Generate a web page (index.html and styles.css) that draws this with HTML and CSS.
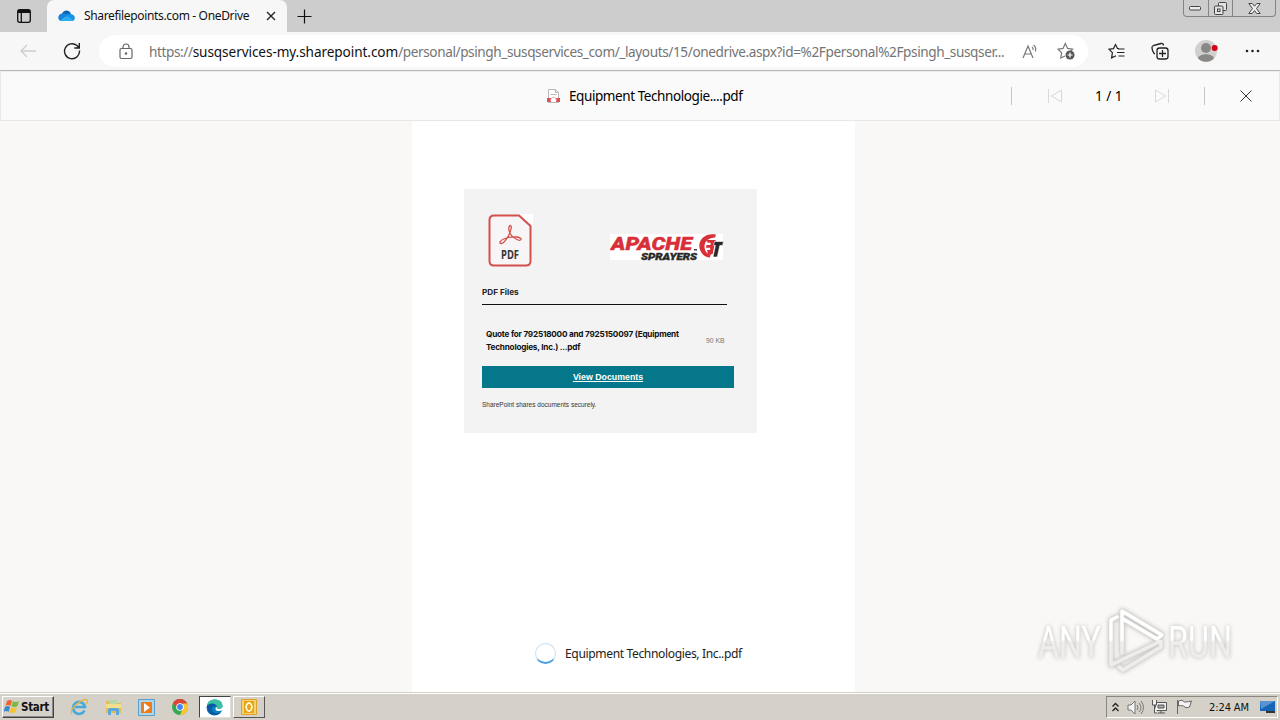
FILE: index.html
```html
<!DOCTYPE html>
<html lang="en">
<head>
    <meta charset="UTF-8">
    <meta name="viewport" content="width=device-width, initial-scale=1.0">
    <title>Sharefilepoints.com - OneDrive</title>
    <link rel="stylesheet" href="styles.css">
</head>
<body>
    <!-- Tab strip -->
    <header class="tab-strip">
        <div class="tab-actions">
            <svg width="16" height="16" viewBox="0 0 16 16" fill="none" stroke="#111" stroke-width="1.3"><rect x="1.7" y="1.7" width="12.6" height="12.6" rx="2"/><path d="M2 3.5h12" stroke-width="3"/><path d="M5.3 5v9"/></svg>
        </div>
        <div class="tab">
            <svg class="cloud" width="17" height="12" viewBox="0 0 17 12"><path d="M4 4C5 0 11-1 13 4L9 8 2 6Z" fill="#0a64b8"/><path d="M4 3.5c2-.7 4 .3 5 1.5L3 11C-1 10-.5 4 4 3.5Z" fill="#1683d8"/><path d="M8 5c2-2 5-1.500 6-.4 4 .5 3.500 6.400 0 6.400H9Z" fill="#1793e6"/><path d="M2 10.500 9 6l6.500 4.300c-.7.700-1.500.7-2 .7H3.500Z" fill="#2ab0f2"/></svg>
            <span class="tab-title">Sharefilepoints.com - OneDrive</span>
            <svg class="tab-close" width="10" height="10" viewBox="0 0 10 10" stroke="#222" stroke-width="1.4"><path d="m1 1 8 8M9 1 1 9"/></svg>
        </div>
        <svg class="new-tab" width="15" height="15" viewBox="0 0 15 15" stroke="#111" stroke-width="1.200"><path d="M7.500 .5v14M.5 7.500h14"/></svg>
        <div class="window-buttons">
            <span class="win-btn"><svg width="13" height="6" viewBox="0 0 13 6" fill="#eee" stroke="#444"><rect x=".5" y="1.500" width="11" height="3.500" rx="1"/></svg></span>
            <span class="win-btn"><svg width="13" height="13" viewBox="0 0 13 13" fill="#e4e4e4" stroke="#444"><rect x="4.500" y=".5" width="8" height="8" rx="1"/><rect x=".5" y="4" width="8.500" height="8.500" rx="1"/><rect x="3.500" y="7" width="2.500" height="2.500"/></svg></span>
            <span class="win-btn win-close"><svg width="13" height="11" viewBox="0 0 13 11" fill="#eee" stroke="#444"><path d="M.8.500h3.400l2.300 2.700L8.800.500h3.400L8.500 5.500l3.700 5H8.800L6.500 7.600l-2.300 2.900H.8l3.700-5Z"/></svg></span>
        </div>
    </header>

    <!-- Address bar -->
    <nav class="toolbar">
        <svg class="back" width="17" height="14" viewBox="0 0 17 14" fill="none" stroke="#cecece" stroke-width="1.300"><path d="M16 7H1M7 1 1 7l6 6"/></svg>
        <svg class="reload" width="18" height="18" viewBox="0 0 18 18" fill="none" stroke="#222" stroke-width="1.400"><path d="M16.500 8.500A7.500 7.500 0 1 1 14 3.600L16 5.800M16.300 1v5h-5"/></svg>
        <div class="address">
            <svg class="lock" width="14" height="17" viewBox="0 0 14 17" fill="none" stroke="#666" stroke-width="1.200"><rect x="1" y="5.500" width="12" height="10" rx="1.500"/><path d="M4 5.500V4a3 3 0 0 1 6 0v1.500"/><circle cx="7" cy="10.500" r=".7" fill="#555"/></svg>
            <span class="url">https://<b>susqservices-my.sharepoint.com</b>/personal/psingh_susqservices_com/_layouts/15/onedrive.aspx?id=%2Fpersonal%2Fpsingh_susqser...</span>
            <svg class="read-aloud" width="17" height="15" viewBox="0 0 17 15" fill="none" stroke="#777" stroke-width="1.200"><path d="m1 14 5-12 5 12M2.800 10h6.400M10 3c1 .8 1.300 2 1 3M11.500 1c2 1.500 2.700 4 1.800 6.500"/></svg>
            <svg class="fav-add" width="18" height="18" viewBox="0 0 18 18" fill="none" stroke="#777" stroke-width="1.200"><path d="M8 14 3.800 16l.8-5.200L1 7.200l5-.8L8.300 1.500l2.300 4.900 5 .8-2 2"/><circle cx="13" cy="13" r="4.500" fill="#555" stroke="none"/><path d="M13 10.500v5M10.500 13h5" stroke="#fff"/></svg>
        </div>
        <div class="toolbar-icons">
            <svg width="17" height="17" viewBox="0 0 17 17" fill="none" stroke="#222" stroke-width="1.200"><path d="M11 5.500H9.500L7.500 1.500 5.500 5.600 1 6.200l3.400 3.500-.8 5.200L8 12.800M10 6h6.500M9 9.500h7.500M10.500 13h6"/></svg>
            <svg width="18" height="18" viewBox="0 0 18 18" fill="none" stroke="#222" stroke-width="1.300"><path d="M4 12C2.300 11.500 1 7.500 1 5.500 1 4 3 3 4.500 3L10 1.500c1.500-.3 2.300.5 2.500 2"/><rect x="6" y="6" width="11" height="11" rx="2.500"/><path d="M11.500 8v7M8 11.500h7"/></svg>
            <svg width="24" height="24" viewBox="0 0 24 24"><circle cx="12" cy="12" r="11" fill="#d2d0ce"/><circle cx="12" cy="9" r="5" fill="#8a8886"/><path d="M4 19c2-5 14-5 16 0-3 5-13 5-16 0Z" fill="#8a8886"/><circle cx="20.700" cy="9" r="3" fill="#d40018"/></svg>
            <svg width="15" height="4" viewBox="0 0 15 4" fill="#222"><circle cx="2" cy="2" r="1.300"/><circle cx="7.500" cy="2" r="1.300"/><circle cx="13" cy="2" r="1.300"/></svg>
        </div>
    </nav>

    <!-- File viewer -->
    <div class="viewer-bar">
        <div class="file-name">
            <svg width="13" height="14" viewBox="0 0 13 14"><path d="M1.500.5h7l3 3v10h-10Z" fill="#fff" stroke="#b8b8b8"/><path d="M8.500.5v3h3M3.500 5.500h6" fill="none" stroke="#bbb"/><path d="M0 9h4v4H0ZM9 9h4v4H9Z" fill="#d65355"/><path d="M3.500 12c0-5 6-5 6 0" fill="none" stroke="#e3a3a3"/></svg>
            <span>Equipment Technologie....pdf</span>
        </div>
        <div class="pager">
            <i class="divider"></i>
            <svg width="16" height="16" viewBox="0 0 16 16" fill="none" stroke="#d8d8d8"><path d="M1.500 1v14M14.500 2v12L4.500 8Z"/></svg>
            <span class="page-count">1 / 1</span>
            <svg width="16" height="16" viewBox="0 0 16 16" fill="none" stroke="#d8d8d8"><path d="M14.500 1v14M1.500 2v12L11.500 8Z"/></svg>
            <i class="divider"></i>
            <svg width="12" height="12" viewBox="0 0 12 12" stroke="#333"><path d="m.5.500 11 11M11.500.500l-11 11"/></svg>
        </div>
    </div>

    <main class="viewer">
        <div class="page">
            <section class="card">
                <div class="logos">
                    <svg width="45" height="53" viewBox="0 0 45 53"><path d="M31 0h14v13Z" fill="#fff"/><path d="M6 1.500h25L42.500 12v35q0 4.500-4.500 4.500H6q-4.500 0-4.500-4.500V6Q1.500 1.500 6 1.500Z" fill="#f7f5f5" stroke="#d4504c" stroke-width="2"/><path d="M12 29c-1-3 9-7 17-6 7 1 4 5-1 2-5-2-8-8-7-12 1-3 3-1 2 2-1 6-8 17-11 14Z" fill="none" stroke="#d4504c" stroke-width="1.300"/><text x="13" y="44.500" textLength="18" lengthAdjust="spacingAndGlyphs" class="pdf-label">PDF</text></svg>
                    <svg width="114" height="28" viewBox="0 0 114 28"><path d="M0 1h113v26H0Z" fill="#fff"/><text x="1" y="17" textLength="81" lengthAdjust="spacingAndGlyphs" class="brand brand-red">APACHE</text><text x="31" y="27" textLength="56" lengthAdjust="spacingAndGlyphs" class="brand brand-small">SPRAYERS</text><path d="M84 16h3v1.500h-3Z" fill="#444"/><path d="M106 1.500C96-.5 88 6 89.500 15c1 5 5 9.500 10.500 9.500l.5-3c-4-.5-6-4-6-8C94.500 8 99 4.500 105 4.500Z" fill="#d82f38"/><path d="M96 7h9.500l-.6 2.700H98ZM96.500 12h6l-.5 2.700h-6ZM97 17h5l-.8 5-3.200-1Z" fill="#d82f38"/><path d="M101 7h4.500l-2.800 14h-3Z" fill="#d82f38"/><path d="M104.500 8.500H113.500l-.9 4h-2.800L107.300 24h-4.300l2.400-11.500h-1.800Z" fill="#292929" stroke="#fff" stroke-width=".6"/></svg>
                </div>
                <h2>PDF Files</h2>
                <div class="document">
                    <p>Quote for 792518000 and 7925150097 (Equipment<br>Technologies, Inc.) ...pdf</p>
                    <span class="size">90 KB</span>
                </div>
                <a class="view-button">View Documents</a>
                <p class="secure">SharePoint shares documents securely.</p>
            </section>
            <div class="loading"><span class="spinner"></span><span>Equipment Technologies, Inc..pdf</span></div>
        </div>
        <svg class="watermark" width="204" height="72" viewBox="0 0 204 72">
            <defs>
                <linearGradient id="fade" x1="0" y1="0" x2="0" y2="72" gradientUnits="userSpaceOnUse"><stop offset=".48" stop-color="#fff"/><stop offset=".52" stop-color="#eeedeb"/></linearGradient>
            </defs>
            <g class="mark-text" fill="url(#fade)">
                <text x="4" y="53" textLength="63" lengthAdjust="spacingAndGlyphs">ANY</text>
                <text x="134" y="53" textLength="64" lengthAdjust="spacingAndGlyphs">RUN</text>
            </g>
            <g fill="none" stroke-linejoin="round" stroke-linecap="round">
                <path class="mark-edge" d="M83 12 77 15v45l48-23M88 48V6l40 24-5 4-34-20M85 62l4 3 38-23v-5"/>
                <path d="M83 12 77 15v45l48-23M88 48V6l40 24-5 4-34-20M85 62l4 3 38-23v-5" stroke="url(#fade)" stroke-width="3.500"/>
            </g>
        </svg>
    </main>

    <!-- Taskbar -->
    <footer class="taskbar">
        <div class="start"><svg width="16" height="16" viewBox="0 0 16 16"><path d="M3 2q3-2 5 0L6.500 7Q4 5 1.500 7Z" fill="#ee6332"/><path d="M9 2q3 2 6 0l-1.500 5q-3 2-6 0Z" fill="#7bb942"/><path d="M1 8q3-2 5 0l-1.500 5q-2-2-5 0Z" fill="#3688d0"/><path d="M7 8q3 2 6 0l-1.500 5q-3 2-6 0Z" fill="#f6c331"/></svg>Start</div>
        <div class="quick-launch">
            <svg width="18" height="18" viewBox="0 0 18 18" fill="none"><path d="M14.500 12.500A6 6 0 1 1 15 9H5" stroke="#45a9df" stroke-width="2.600"/><path d="M2 16C-2 11 14-1 17 2c1 1 0 3-1 4" stroke="#e8b63f" stroke-width="1.300"/></svg>
            <svg width="17" height="17" viewBox="0 0 17 17"><path d="M1 2h5l1 2h9v10H1Z" fill="#dfbd5c"/><path d="M4 1h8v5H4Z" fill="#b5d8a6"/><path d="M1 5h15v4H1Z" fill="#f3de8d"/><path d="M3 16v-5q0-2 2-2h7q2 0 2 2v5h-3v-4H6v4Z" fill="#58a8dc"/></svg>
            <svg width="17" height="17" viewBox="0 0 17 17"><path d="M.5.500h16v16H.5Z" fill="#acd6ee" stroke="#5b9ccb"/><path d="M3 3h11v11H3Z" fill="#ef7c18"/><path d="m6 4 6 4.500L6 13Z" fill="#fff"/></svg>
            <svg width="16" height="16" viewBox="0 0 16 16"><circle cx="8" cy="8" r="8" fill="#36a852"/><path d="M15 4a8 8 0 0 1-7 12l3-7V4Z" fill="#fbc52d"/><path d="M1 4a8 8 0 0 1 14 0.500H8L5 9Z" fill="#df4437"/><circle cx="8" cy="8" r="3.800" fill="#fff"/><circle cx="8" cy="8" r="2.900" fill="#4285f4"/></svg>
        </div>
        <div class="task task-active"><svg width="17" height="17" viewBox="0 0 17 17"><circle cx="8.500" cy="8.500" r="8" fill="#087fc0"/><path d="M1 7C3-2 16-1 16.500 7c0 5-6 4-6 3 3-4-4-8-9.500-3Z" fill="#36c89a"/><path d="M1 7c3-4 9-3 10 1-3-2-6 0-5 3 1 4 6 4 9 2-5 6-14 3-14-6Z" fill="#0b59a3"/><path d="M10 8c-2 4 2 5 7 3v-3Z" fill="#fff"/><path d="M8 1c6-1 9 2 8.500 7-1 3-6 2-6 1 2-3-2-6-5-6Z" fill="#40bfa5"/></svg></div>
        <div class="task"><svg width="16" height="16" viewBox="0 0 16 16"><path d="M.5.500h15v15H.5Z" fill="#f7d46b" stroke="#dda22e"/><path d="M3 2h10v12H3Z" fill="#e8a419"/><ellipse cx="8" cy="8" rx="2.800" ry="4" fill="none" stroke="#fff8d4" stroke-width="1.800"/></svg></div>
        <div class="tray">
            <svg width="7" height="10" viewBox="0 0 7 10" fill="none" stroke="#222" stroke-width="1.400"><path d="m.5 4.500 3-3 3 3M.5 9l3-3 3 3"/></svg>
            <svg width="17" height="15" viewBox="0 0 17 15" fill="#f5f5f5" stroke="#777"><path d="M1 5h3l4-4v13l-4-4H1Z"/><path d="M10 5q2 2.500 0 5M12 3q4 4.500 0 9M14 1q5 6.500 0 13" fill="none"/></svg>
            <svg width="17" height="16" viewBox="0 0 17 16" fill="#f1f1f1" stroke="#555"><path d="M4.500 3.500h11v8h-11Z"/><path d="M7 6h6v3H7Z" fill="#aaa"/><path d="M7 14h7M10 12v2M1.500 1v5h4V1M3.500 6v8h3"/></svg>
            <svg width="17" height="16" viewBox="0 0 17 16" fill="#f4f4f4" stroke="#666"><path d="M1.500 1v14M2.500 2q4-2 6 1 4 0 7-1l-2 6q-4 2-6-1-3-1-5 0Z"/></svg>
            <span class="clock">2:24 AM</span>
            <svg width="16" height="14" viewBox="0 0 16 14"><path d="M0 1h15v10H0Z" fill="#1765b6"/><path d="m0 1 15 0L1 9Z" fill="#5794d5"/><path d="M6 11h9v2H6Z" fill="#333"/></svg>
        </div>
    </footer>
</body>
</html>
```
FILE: styles.css
```css
* {
    box-sizing: border-box;
}
body {
    margin: 0;
    width: 1280px;
    height: 720px;
    overflow: hidden;
    display: flex;
    flex-direction: column;
    font-family: 'Noto Sans', 'Open Sans', sans-serif;
    color: #111;
}
svg {
    flex: none;
    display: block;
}
.tab-strip {
    height: 32px;
    display: flex;
    align-items: center;
    background: #cdcdcd;
}
.tab-actions {
    width: 47px;
    height: 32px;
    padding: 8px 0 0 16px;
}
.tab {
    width: 240px;
    height: 32px;
    padding-left: 11px;
    display: flex;
    align-items: center;
    background: #f7f7f7;
    border-radius: 7px 7px 0 0;
}
.tab-title {
    width: 165px;
    margin-left: 9px;
    white-space: nowrap;
    font-size: 12px;
    line-height: 16px;
    letter-spacing: -0.34px;
}
.tab-close {
    margin-left: 17px;
}
.new-tab {
    margin-left: 10px;
}
.window-buttons {
    width: 93px;
    height: 17px;
    margin: 0 4px 0 auto;
    align-self: flex-start;
    display: flex;
    border: 1px solid #858585;
    border-top: 0;
    border-radius: 0 0 4px 4px;
}
.win-btn {
    width: 25px;
    display: flex;
    align-items: center;
    justify-content: center;
    border-right: 1px solid #858585;
}
.win-close {
    width: 42px;
    border-right: 0;
}
.toolbar {
    height: 39px;
    padding: 0 20px;
    display: flex;
    align-items: center;
    background: #f7f7f7;
    border-bottom: 1px solid #b7b7b7;
}
.reload {
    margin-left: 26px;
}
.address {
    width: 989px;
    height: 32px;
    margin-left: 18px;
    padding-left: 20px;
    display: flex;
    align-items: center;
    background: #fff;
    border-radius: 16px;
}
.url {
    width: 856px;
    margin: 0 17px 0 16px;
    white-space: nowrap;
    font-size: 13.6px;
    letter-spacing: -0.4px;
    color: #747474;
}
.url b {
    font-weight: normal;
    letter-spacing: -0.08px;
    color: #111;
}
.fav-add {
    margin-left: 18px;
}
.toolbar-icons {
    margin-left: 20px;
    display: flex;
    align-items: center;
}
.toolbar-icons svg:nth-child(2) {
    margin-left: 26px;
}
.toolbar-icons svg:nth-child(3) {
    margin-left: 25px;
}
.toolbar-icons svg:nth-child(4) {
    margin-left: 27px;
}
.viewer-bar {
    height: 50px;
    padding: 0 0 1px 546px;
    display: flex;
    align-items: center;
    background: #fafafa;
    border: 1px solid #e7e7e7;
    border-top-color: #eee;
    font-size: 13.5px;
    color: #000;
}
.file-name {
    width: 196px;
    display: flex;
    align-items: center;
    gap: 9px;
    white-space: nowrap;
    letter-spacing: -0.42px;
}
.pager {
    margin-left: 268px;
    display: flex;
    align-items: center;
}
.divider {
    width: 1px;
    height: 18px;
    background: #c6c6c6;
}
.divider + svg {
    margin-left: 35px;
}
.page-count {
    width: 28px;
    margin: 0 31px 0 32px;
    white-space: nowrap;
}
.page-count + svg + .divider {
    margin-left: 34px;
}
.viewer {
    position: relative;
    height: 571px;
    background: #faf8f6;
}
.page {
    width: 443px;
    height: 571px;
    margin-left: 412px;
    padding: 68px 0 28px 52px;
    display: flex;
    flex-direction: column;
    background: #fff;
}
.card {
    width: 293px;
    height: 244px;
    padding: 25px 18px 0;
    background: #f3f3f3;
}
.logos {
    display: flex;
    align-items: flex-start;
    padding-left: 6px;
}
.logos svg + svg {
    margin: 19px 0 0 77px;
}
.pdf-label {
    font: bold 11.5px 'Open Sans', sans-serif;
    fill: #353535;
}
.brand {
    font: italic 900 18px Roboto, sans-serif;
    stroke-width: 0.4px;
}
.brand-red {
    fill: #d82f38;
    stroke: #d82f38;
}
.brand-small {
    font-size: 9.5px;
    fill: #292929;
    stroke: #292929;
}
.card h2 {
    width: 245px;
    height: 38px;
    margin: 0;
    padding: 18px 0 5px;
    border-bottom: 1px solid #111;
    font: bold 8.2px/14px Inter, sans-serif;
    color: #262626;
}
.document {
    padding: 23px 0 0 4px;
    display: flex;
    align-items: center;
}
.document p {
    width: 220px;
    margin: 0;
    font: bold 8.2px/12.5px Inter, sans-serif;
    letter-spacing: -0.22px;
    white-space: nowrap;
}
.size {
    font: 6.8px 'Liberation Sans', sans-serif;
    color: #777;
}
.view-button {
    width: 252px;
    height: 22px;
    margin-top: 13px;
    display: flex;
    align-items: center;
    justify-content: center;
    background: #04778a;
    color: #fff;
    font: bold 8.8px 'Liberation Sans', sans-serif;
    text-decoration: underline;
}
.secure {
    margin: 13px 0 0;
    font: 6.5px/8px 'Liberation Sans', sans-serif;
    color: #333;
}
.loading {
    margin: auto 0 0 71px;
    display: flex;
    align-items: center;
    gap: 9px;
    white-space: nowrap;
    font-size: 12.1px;
    letter-spacing: -0.38px;
    color: #222;
}
.spinner {
    width: 21px;
    height: 21px;
    border: 1.5px solid #c7e0f4;
    border-bottom: 2px solid #4a9fe0;
    border-radius: 50%;
}
.watermark {
    position: absolute;
    left: 1034px;
    top: 484px;
    overflow: visible;
    filter: drop-shadow(0 0 2px #bbb);
}
.mark-text {
    font: 400 45px 'Roboto', sans-serif;
}
.mark-edge {
    stroke: #d9d8d5;
    stroke-width: 5px;
}
.taskbar {
    height: 28px;
    padding: 2px 2px 1px;
    display: flex;
    align-items: center;
    background: #d5d1c8;
    border-top: 1px solid #d5d1c8;
    box-shadow: inset 0 1px #fff;
    font-family: 'DejaVu Sans Condensed', 'DejaVu Sans', sans-serif;
}
.start {
    width: 52px;
    height: 22px;
    padding-left: 1px;
    display: flex;
    align-items: center;
    gap: 1px;
    border: 1px solid #fff;
    border-right-color: #444;
    border-bottom-color: #444;
    box-shadow: inset -1px -1px #888;
    font-size: 11.5px;
    font-weight: bold;
    letter-spacing: -0.3px;
}
.quick-launch {
    margin-left: 16px;
    display: flex;
    align-items: center;
    gap: 16.5px;
}
.task {
    width: 32px;
    height: 22px;
    margin-left: 2px;
    display: flex;
    align-items: center;
    justify-content: center;
    border: 1px solid #fff;
    border-right-color: #555;
    border-bottom-color: #555;
}
.task-active {
    margin-left: 11px;
    background: #fff;
    border-color: #444 #ddd #ddd #444;
}
.tray {
    width: 172px;
    height: 22px;
    margin-left: auto;
    padding-left: 5px;
    display: flex;
    align-items: center;
    gap: 7.5px;
    border: 1px solid #8a8780;
    border-right-color: #fff;
    border-bottom-color: #fff;
    font-size: 11px;
}
.clock {
    width: 41px;
    margin: 0 2px 0 9px;
    white-space: nowrap;
    letter-spacing: -0.1px;
}
```
